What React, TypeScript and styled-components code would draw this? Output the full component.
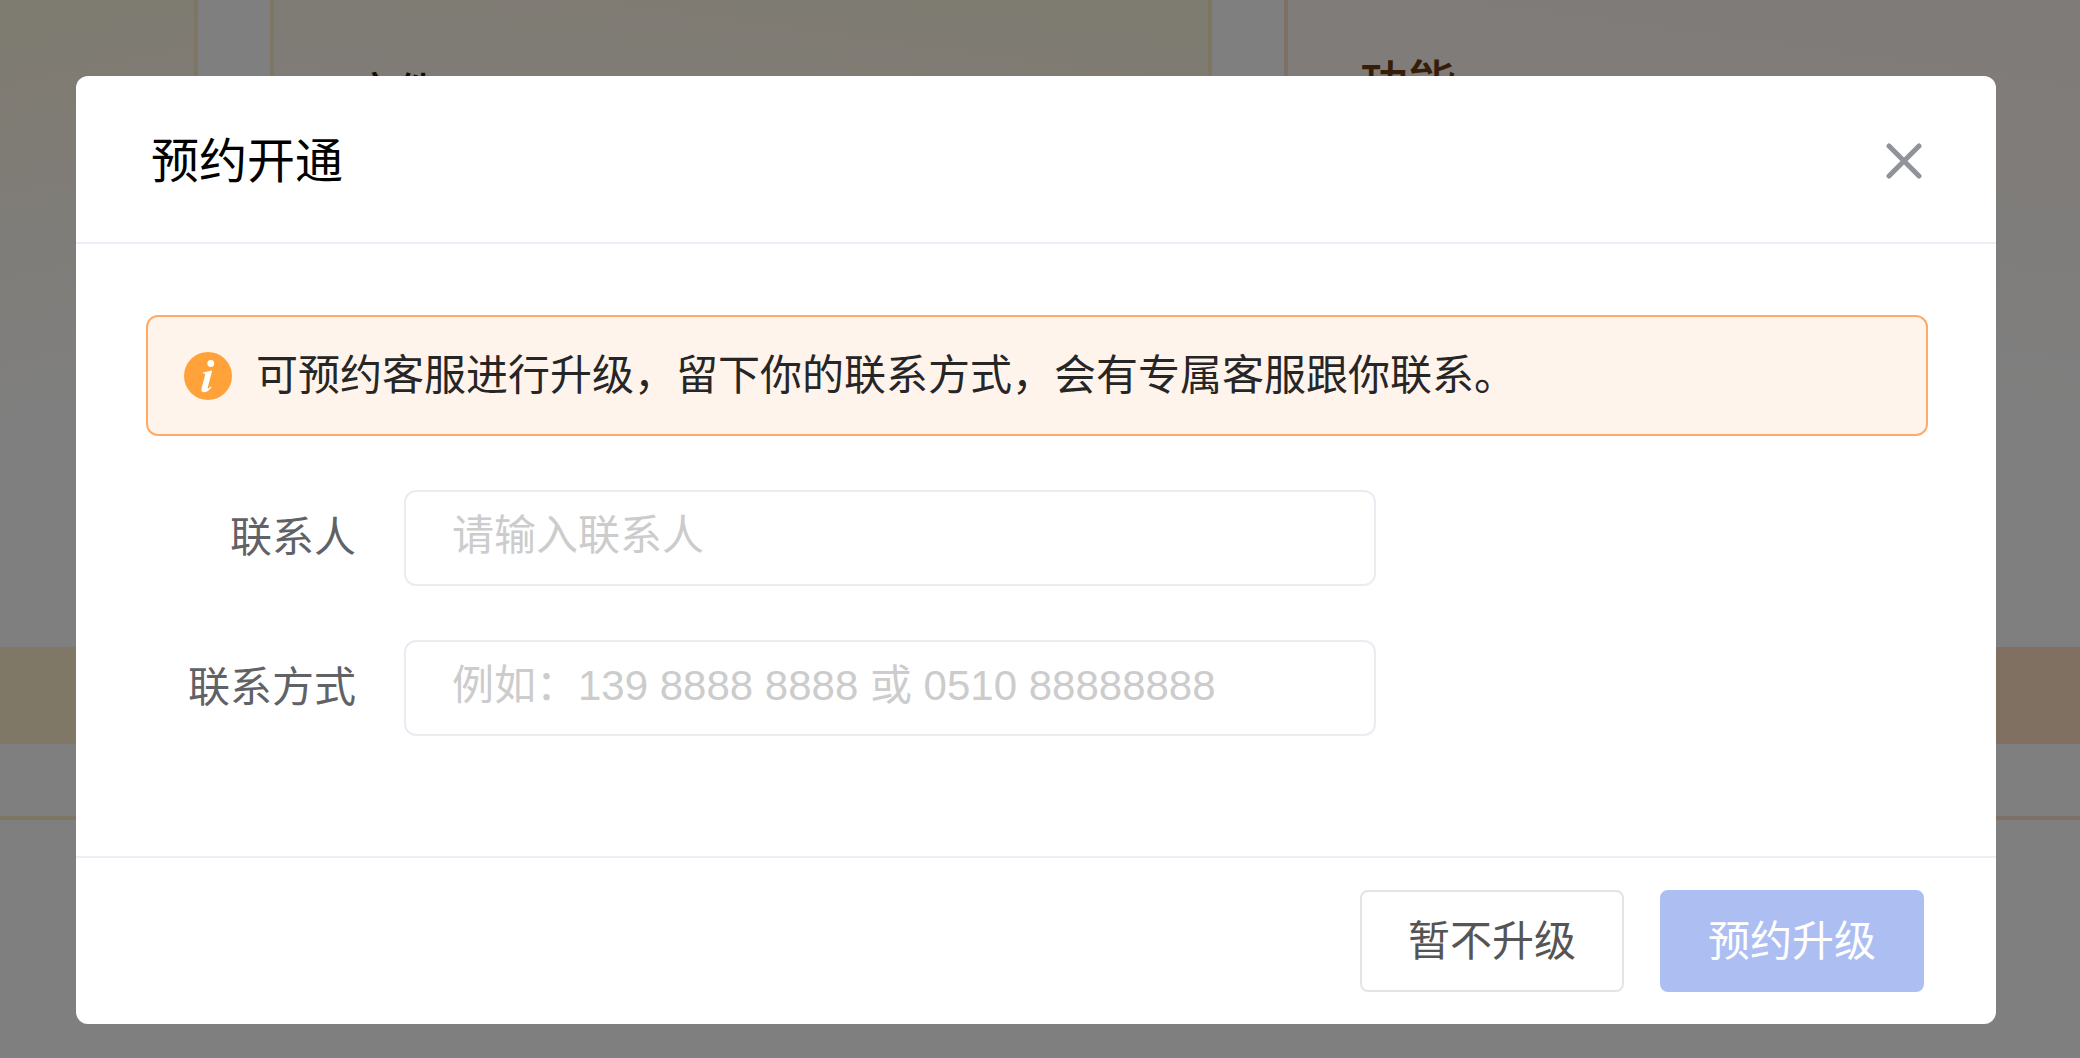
import React, { useState } from "react";
import styled, { createGlobalStyle } from "styled-components";

const GlobalStyle = createGlobalStyle`
  * { box-sizing: border-box; }
  body {
    margin: 0;
    background: #fff;
    font-family: "Liberation Sans", "Noto Sans CJK SC", sans-serif;
  }
  button, input { font-family: inherit; }
`;

const Screen = styled.div`
  display: grid;
  min-height: 100vh;
  overflow: hidden;
  > * { grid-area: 1 / 1; }
`;

const Plans = styled.main`
  display: grid;
  grid-template-columns: 198fr 942fr 796fr;
  column-gap: 72px;
  align-items: start;
`;

const Plan = styled.section<{ $tone: string; $fill: string; $open?: "left" | "right" }>`
  display: flex;
  flex-direction: column;
  height: 820px;
  border: 4px solid ${(p) => p.$tone};
  border-top: 0;
  ${(p) => p.$open && `border-${p.$open}: 0;`}
  background: ${(p) => p.$fill};
`;

const PlanName = styled.h2<{ $color: string; $size: number; $top: number; $inset: number }>`
  margin: 0;
  padding: ${(p) => p.$top}px 0 0 ${(p) => p.$inset}px;
  color: ${(p) => p.$color};
  font-size: ${(p) => p.$size}px;
  line-height: 56px;
  font-weight: 500;
`;

const PlanBar = styled.div<{ $fill: string }>`
  height: 97px;
  margin: auto 0 72px;
  background: ${(p) => p.$fill};
`;

const Overlay = styled.div`
  z-index: 1;
  display: flex;
  align-items: flex-start;
  padding: 76px 84px 32px 76px;
  background: rgba(0, 0, 0, 0.5);
`;

const Dialog = styled.form`
  flex: 1;
  border-radius: 12px;
  background: #fff;
`;

const Header = styled.header`
  display: flex;
  align-items: center;
  justify-content: space-between;
  height: 168px;
  padding: 6px 74px 0 75px;
  border-bottom: 2px solid #ebeef5;
`;

const Title = styled.h1`
  margin: 0;
  color: #000;
  font-size: 48px;
  line-height: 72px;
  font-weight: 400;
`;

const CloseButton = styled.button`
  display: flex;
  padding: 0 0 2px;
  border: 0;
  background: none;
  color: #909399;
  cursor: pointer;
`;

const Body = styled.div`
  padding: 71px 68px 120px 70px;
`;

const Notice = styled.div`
  display: flex;
  align-items: center;
  gap: 24px;
  height: 121px;
  padding: 0 36px;
  border: 2px solid #ffab66;
  border-radius: 12px;
  background: #fff4ec;
  color: #262626;
  font-size: 42px;
  line-height: 60px;
`;

const Fields = styled.div`
  display: grid;
  gap: 54px;
  padding-top: 54px;
`;

const Field = styled.div`
  display: grid;
  grid-template-columns: 210px minmax(0, 972px);
  column-gap: 48px;
  align-items: center;
`;

const Label = styled.label`
  color: #606266;
  font-size: 42px;
  line-height: 60px;
  text-align: right;
`;

const TextInput = styled.input`
  width: 100%;
  height: 96px;
  padding: 0 46px 4px;
  border: 2px solid #ebebf2;
  border-radius: 12px;
  outline: none;
  background: #fff;
  color: #606266;
  font-size: 42px;
  &::placeholder { color: #ccc; opacity: 1; }
`;

const Footer = styled.footer`
  display: flex;
  justify-content: flex-end;
  gap: 36px;
  padding: 32px 72px;
  border-top: 2px solid #ebeef5;
`;

const Button = styled.button<{ $primary?: boolean }>`
  width: 264px;
  height: 102px;
  padding: 2px 0 0;
  border: 2px solid ${(p) => (p.$primary ? "#adbff2" : "#e4e4e4")};
  border-radius: 8px;
  background: ${(p) => (p.$primary ? "#adbff2" : "#fff")};
  color: ${(p) => (p.$primary ? "#fff" : "#555")};
  font-size: 42px;
  line-height: 60px;
  cursor: pointer;
`;

function CloseIcon() {
  return (
    <svg width="36" height="36" viewBox="0 0 36 36" fill="none" stroke="currentColor" strokeWidth="5" strokeLinecap="round" aria-hidden="true">
      <path d="M3 3 33 33M33 3 3 33" />
    </svg>
  );
}

function InfoIcon() {
  return (
    <svg width="48" height="48" viewBox="0 0 48 48" aria-hidden="true">
      <circle cx="24" cy="24" r="24" fill="#ffa23a" />
      <circle cx="26.8" cy="11.5" r="3.4" fill="#fff" />
      <path d="M19 20.4 28.2 18.6 23.8 35.2C23.4 37 24.4 36.8 26.6 34.4L27.6 35.2C25 38.8 22.4 40.2 20 40.2 17.6 40.2 17 38.6 17.6 36.2L21 23.4C21.4 21.8 20.8 21.6 18.7 21.6Z" fill="#fff" />
    </svg>
  );
}

export default function App() {
  const [person, setPerson] = useState("");
  const [phone, setPhone] = useState("");

  return (
    <>
      <GlobalStyle />
      <Screen>
        <Plans aria-hidden="true">
          <Plan $tone="#fbecc4" $fill="linear-gradient(168deg, #fdf6e0 0, #fff9ee 170px, #fff 420px)" $open="left">
            <PlanBar $fill="#fff0cc" />
          </Plan>
          <Plan $tone="#fbecc4" $fill="linear-gradient(188deg, #fdf6e0 0, #fff9ee 170px, #fff 420px)">
            <PlanName $color="#2a1a0c" $size={42} $top={66} $inset={80}>文件</PlanName>
            <PlanBar $fill="#fff0cc" />
          </Plan>
          <Plan $tone="#fbe3cc" $fill="linear-gradient(188deg, #fff6f0 0, #fff9f4 170px, #fff 420px)" $open="right">
            <PlanName $color="#6e3a0e" $size={48} $top={56} $inset={72}>功能</PlanName>
            <PlanBar $fill="#ffe0c4" />
          </Plan>
        </Plans>
        <Overlay>
          <Dialog role="dialog" aria-labelledby="dialog-title" onSubmit={(e) => e.preventDefault()}>
            <Header>
              <Title id="dialog-title">预约开通</Title>
              <CloseButton type="button" aria-label="关闭"><CloseIcon /></CloseButton>
            </Header>
            <Body>
              <Notice role="note">
                <InfoIcon />
                <span>可预约客服进行升级，留下你的联系方式，会有专属客服跟你联系。</span>
              </Notice>
              <Fields>
                <Field>
                  <Label htmlFor="person">联系人</Label>
                  <TextInput id="person" placeholder="请输入联系人" value={person} onChange={(e) => setPerson(e.target.value)} />
                </Field>
                <Field>
                  <Label htmlFor="phone">联系方式</Label>
                  <TextInput id="phone" placeholder="例如：139 8888 8888 或 0510 88888888" value={phone} onChange={(e) => setPhone(e.target.value)} />
                </Field>
              </Fields>
            </Body>
            <Footer>
              <Button type="button">暂不升级</Button>
              <Button type="submit" $primary>预约升级</Button>
            </Footer>
          </Dialog>
        </Overlay>
      </Screen>
    </>
  );
}
